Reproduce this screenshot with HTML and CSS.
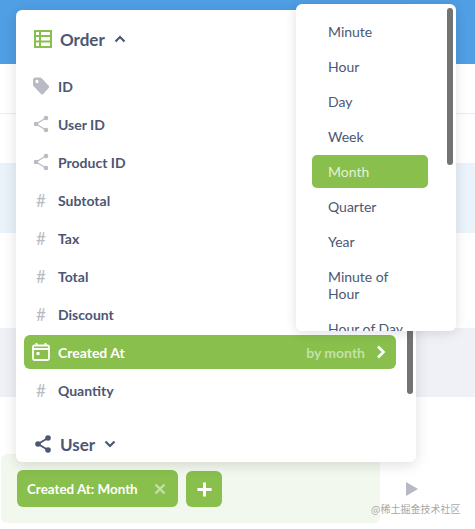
FILE: index.html
```html
<!DOCTYPE html>
<html lang="en">
<head>
	<meta charset="UTF-8">
	<title>Summarize</title>
	<link rel="stylesheet" href="styles.css">
</head>
<body>
	<!-- page behind the popovers -->
	<div class="page">
		<div class="topbar"></div>
		<div class="subbar"></div>
		<div class="band band-blue"></div>
		<div class="band-gap"></div>
		<div class="band band-grey"></div>
		<div class="footer">
			<div class="group-panel">
				<div class="chip">
					<span>Created At: Month</span>
					<svg class="chip-x" viewBox="0 0 12 12"><path d="M1.5 1.5l9 9M10.5 1.5l-9 9"/></svg>
				</div>
				<div class="add-btn">
					<svg viewBox="0 0 18 18"><path d="M9 1.5v15M1.5 9h15"/></svg>
				</div>
			</div>
			<svg class="play" viewBox="0 0 12 14"><path d="M0 0l12 7L0 14z"/></svg>
		</div>
	</div>

	<!-- field list -->
	<div class="menu">
		<div class="menu-head">
			<svg class="table-icon" viewBox="0 0 18 18"><path d="M0 0h18v18H0z M2 2v3h3V2z M7 2v3h9V2z M2 7v3.500h3V7z M7 7v3.500h9V7z M2 12.500V16h3v-3.500z M7 12.500V16h9v-3.500z" fill-rule="evenodd"/></svg>
			<span>Order</span>
			<svg class="chev" viewBox="0 0 12 8"><path d="M1.500 6.500L6 2l4.500 4.500"/></svg>
		</div>
		<ul class="fields">
			<li>
				<svg class="ficon" viewBox="0 0 18 18"><path d="M1 3.300Q1 .5 3.800.5H8q1 0 1.700.7l7 7.500q1 1.100 0 2.200l-5.500 6q-1.100 1-2.200 0L1.700 9.300Q1 8.500 1 7.500zM5 2.800a1.700 1.700 0 1 0 .01 0z" fill-rule="evenodd"/></svg>
				ID
			</li>
			<li>
				<svg class="ficon" viewBox="0 0 18 18"><path class="sh-line" d="M14 3L4 9l10 6"/><circle cx="14" cy="3" r="2.300"/><circle cx="4" cy="9" r="2.300"/><circle cx="14" cy="15" r="2.300"/></svg>
				User ID
			</li>
			<li>
				<svg class="ficon" viewBox="0 0 18 18"><path class="sh-line" d="M14 3L4 9l10 6"/><circle cx="14" cy="3" r="2.300"/><circle cx="4" cy="9" r="2.300"/><circle cx="14" cy="15" r="2.300"/></svg>
				Product ID
			</li>
			<li><span class="hash">#</span>Subtotal</li>
			<li><span class="hash">#</span>Tax</li>
			<li><span class="hash">#</span>Total</li>
			<li><span class="hash">#</span>Discount</li>
			<li class="selected">
				<svg class="ficon cal" viewBox="0 0 18 18"><path d="M4.500 0v3M13.500 0v3M1 4q0-1.500 1.500-1.500h13Q17 2.500 17 4v11.500q0 1.500-1.500 1.500h-13Q1 17 1 15.500zM1 6h16"/><path class="cal-dot" d="M4.500 9h3v3h-3z"/></svg>
				<span class="field-name">Created At</span>
				<span class="by">by month</span>
				<svg class="arrow" viewBox="0 0 10 14"><path d="M2 1.500L7.500 7 2 12.500"/></svg>
			</li>
			<li><span class="hash">#</span>Quantity</li>
		</ul>
		<div class="menu-head user-head">
			<svg class="user-icon" viewBox="0 0 18 18"><path class="sh-line" d="M14 3L4 9l10 6"/><circle cx="14" cy="3" r="2.800"/><circle cx="4" cy="9" r="2.800"/><circle cx="14" cy="15" r="2.800"/></svg>
			<span>User</span>
			<svg class="chev" viewBox="0 0 12 8"><path d="M1.500 1.500L6 6l4.500-4.500"/></svg>
		</div>
		<div class="scroll-thumb menu-thumb"></div>
	</div>

	<!-- bucket list -->
	<div class="sub">
		<ul class="buckets">
			<li>Minute</li>
			<li>Hour</li>
			<li>Day</li>
			<li>Week</li>
			<li class="selected">Month</li>
			<li>Quarter</li>
			<li>Year</li>
			<li>Minute of Hour</li>
			<li>Hour of Day</li>
		</ul>
		<div class="scroll-thumb sub-thumb"></div>
	</div>

	<div class="mark">@稀土掘金技术社区</div>
</body>
</html>
```

FILE: styles.css
```css
*{
	padding:0;
	margin:0;
	box-sizing:border-box;
}
html,body{
	height:100%;
	overflow:hidden;
}
body{
	font-family:Lato,"Liberation Sans","Noto Sans CJK SC",sans-serif;
	color:#4c5773;
	background:#fff;
}
ul{
	list-style:none;
}
.page{
	height:529px;
	display:flex;
	flex-direction:column;
}
.topbar{
	height:64px;
	background:#509ee3;
}
.subbar{
	height:99px;
	background:linear-gradient(#fff 49px,#ececec 49px,#ececec 50px,#fff 50px);
}
.band-blue{
	height:70px;
	background:#ebf3fa;
}
.band-gap{
	height:95px;
}
.band-grey{
	height:69px;
	background:#f0f0f7;
}
.footer{
	display:flex;
	margin-top:57px;
	align-items:center;
}
.group-panel{
	width:379px;
	height:69px;
	margin-left:1px;
	padding:16px 16px 16px;
	display:flex;
	gap:8px;
	background:#f2f8ed;
	border-radius:6px;
}
.chip{
	width:161px;
	height:37px;
	padding:0 12px 0 10px;
	display:flex;
	align-items:center;
	justify-content:space-between;
	background:#88bf4d;
	border-radius:6px;
	color:#fff;
	font-size:13.400px;
	font-weight:700;
}
.chip-x{
	width:12px;
	height:12px;
	fill:none;
	stroke:#c4e0a6;
	stroke-width:2.400;
}
.add-btn{
	width:36px;
	height:36px;
	margin-top:1px;
	display:flex;
	align-items:center;
	justify-content:center;
	background:#88bf4d;
	border-radius:6px;
}
.add-btn svg{
	width:17px;
	height:17px;
	fill:none;
	stroke:#fff;
	stroke-width:3.200;
}
.play{
	width:12px;
	height:14px;
	margin-left:26px;
	fill:#b4b9c2;
}

/* popovers */
.menu{
	position:absolute;
	left:16px;
	top:10px;
	width:400px;
	height:452px;
	background:#fff;
	border-radius:6px;
	box-shadow:0 3px 14px rgba(0,0,0,.13);
}
.menu-head{
	height:24px;
	margin:17px 0 0 18px;
	display:flex;
	align-items:center;
	font-size:17px;
	font-weight:700;
}
.table-icon{
	width:18px;
	height:18px;
	margin-right:8px;
	fill:#88bf4d;
}
.chev{
	width:12px;
	height:8px;
	margin-left:9px;
	fill:none;
	stroke:#4c5773;
	stroke-width:2.200;
}
.fields{
	margin:18px 20px 0 8px;
	display:flex;
	flex-direction:column;
	gap:4px;
}
.fields li{
	height:34px;
	padding-left:34px;
	position:relative;
	display:flex;
	align-items:center;
	font-size:14px;
	font-weight:700;
	border-radius:6px;
}
.ficon{
	position:absolute;
	left:8px;
	top:8px;
	width:18px;
	height:18px;
	fill:#b8bbc3;
}
.sh-line{
	fill:none;
	stroke:#b8bbc3;
	stroke-width:1.200;
}
.hash{
	position:absolute;
	left:12px;
	color:#b8bbc3;
	font-size:17px;
	font-weight:400;
}
.fields .selected{
	background:#88bf4d;
	color:#fff;
	padding-right:10px;
}
.cal{
	fill:none;
	stroke:#fff;
	stroke-width:1.800;
}
.cal-dot{
	fill:#fff;
	stroke:none;
}
.field-name{
	flex:1;
}
.by{
	color:#c4e0a6;
	font-size:14px;
	margin-right:11px;
}
.arrow{
	width:10px;
	height:14px;
	fill:none;
	stroke:#fff;
	stroke-width:2.600;
}
.user-head{
	margin-top:25px;
}
.user-icon{
	width:18px;
	height:18px;
	margin-right:8px;
	fill:#4c5773;
}
.user-icon .sh-line{
	stroke:#4c5773;
	stroke-width:1.800;
}
.scroll-thumb{
	position:absolute;
	width:6px;
	background:#737373;
	border-radius:3px;
}
.menu-thumb{
	left:391px;
	top:4px;
	height:380px;
}
.sub{
	position:absolute;
	left:296px;
	top:4px;
	width:160px;
	height:327px;
	overflow:hidden;
	background:#fff;
	border-radius:6px;
	box-shadow:0 2px 12px rgba(0,0,0,.13);
}
.buckets{
	padding:11px 28px 0 16px;
	display:flex;
	flex-direction:column;
	gap:2px;
	font-size:14px;
}
.buckets li{
	padding:8px 16px;
	line-height:17px;
	border-radius:5px;
}
.buckets .selected{
	background:#88bf4d;
	color:#e4f2d4;
}
.sub-thumb{
	left:151px;
	top:4px;
	height:157px;
}
.mark{
	position:absolute;
	left:371px;
	top:502px;
	font-size:10px;
	line-height:14px;
	color:#a8a8a8;
	font-family:"Noto Sans CJK SC",sans-serif;
}
```
